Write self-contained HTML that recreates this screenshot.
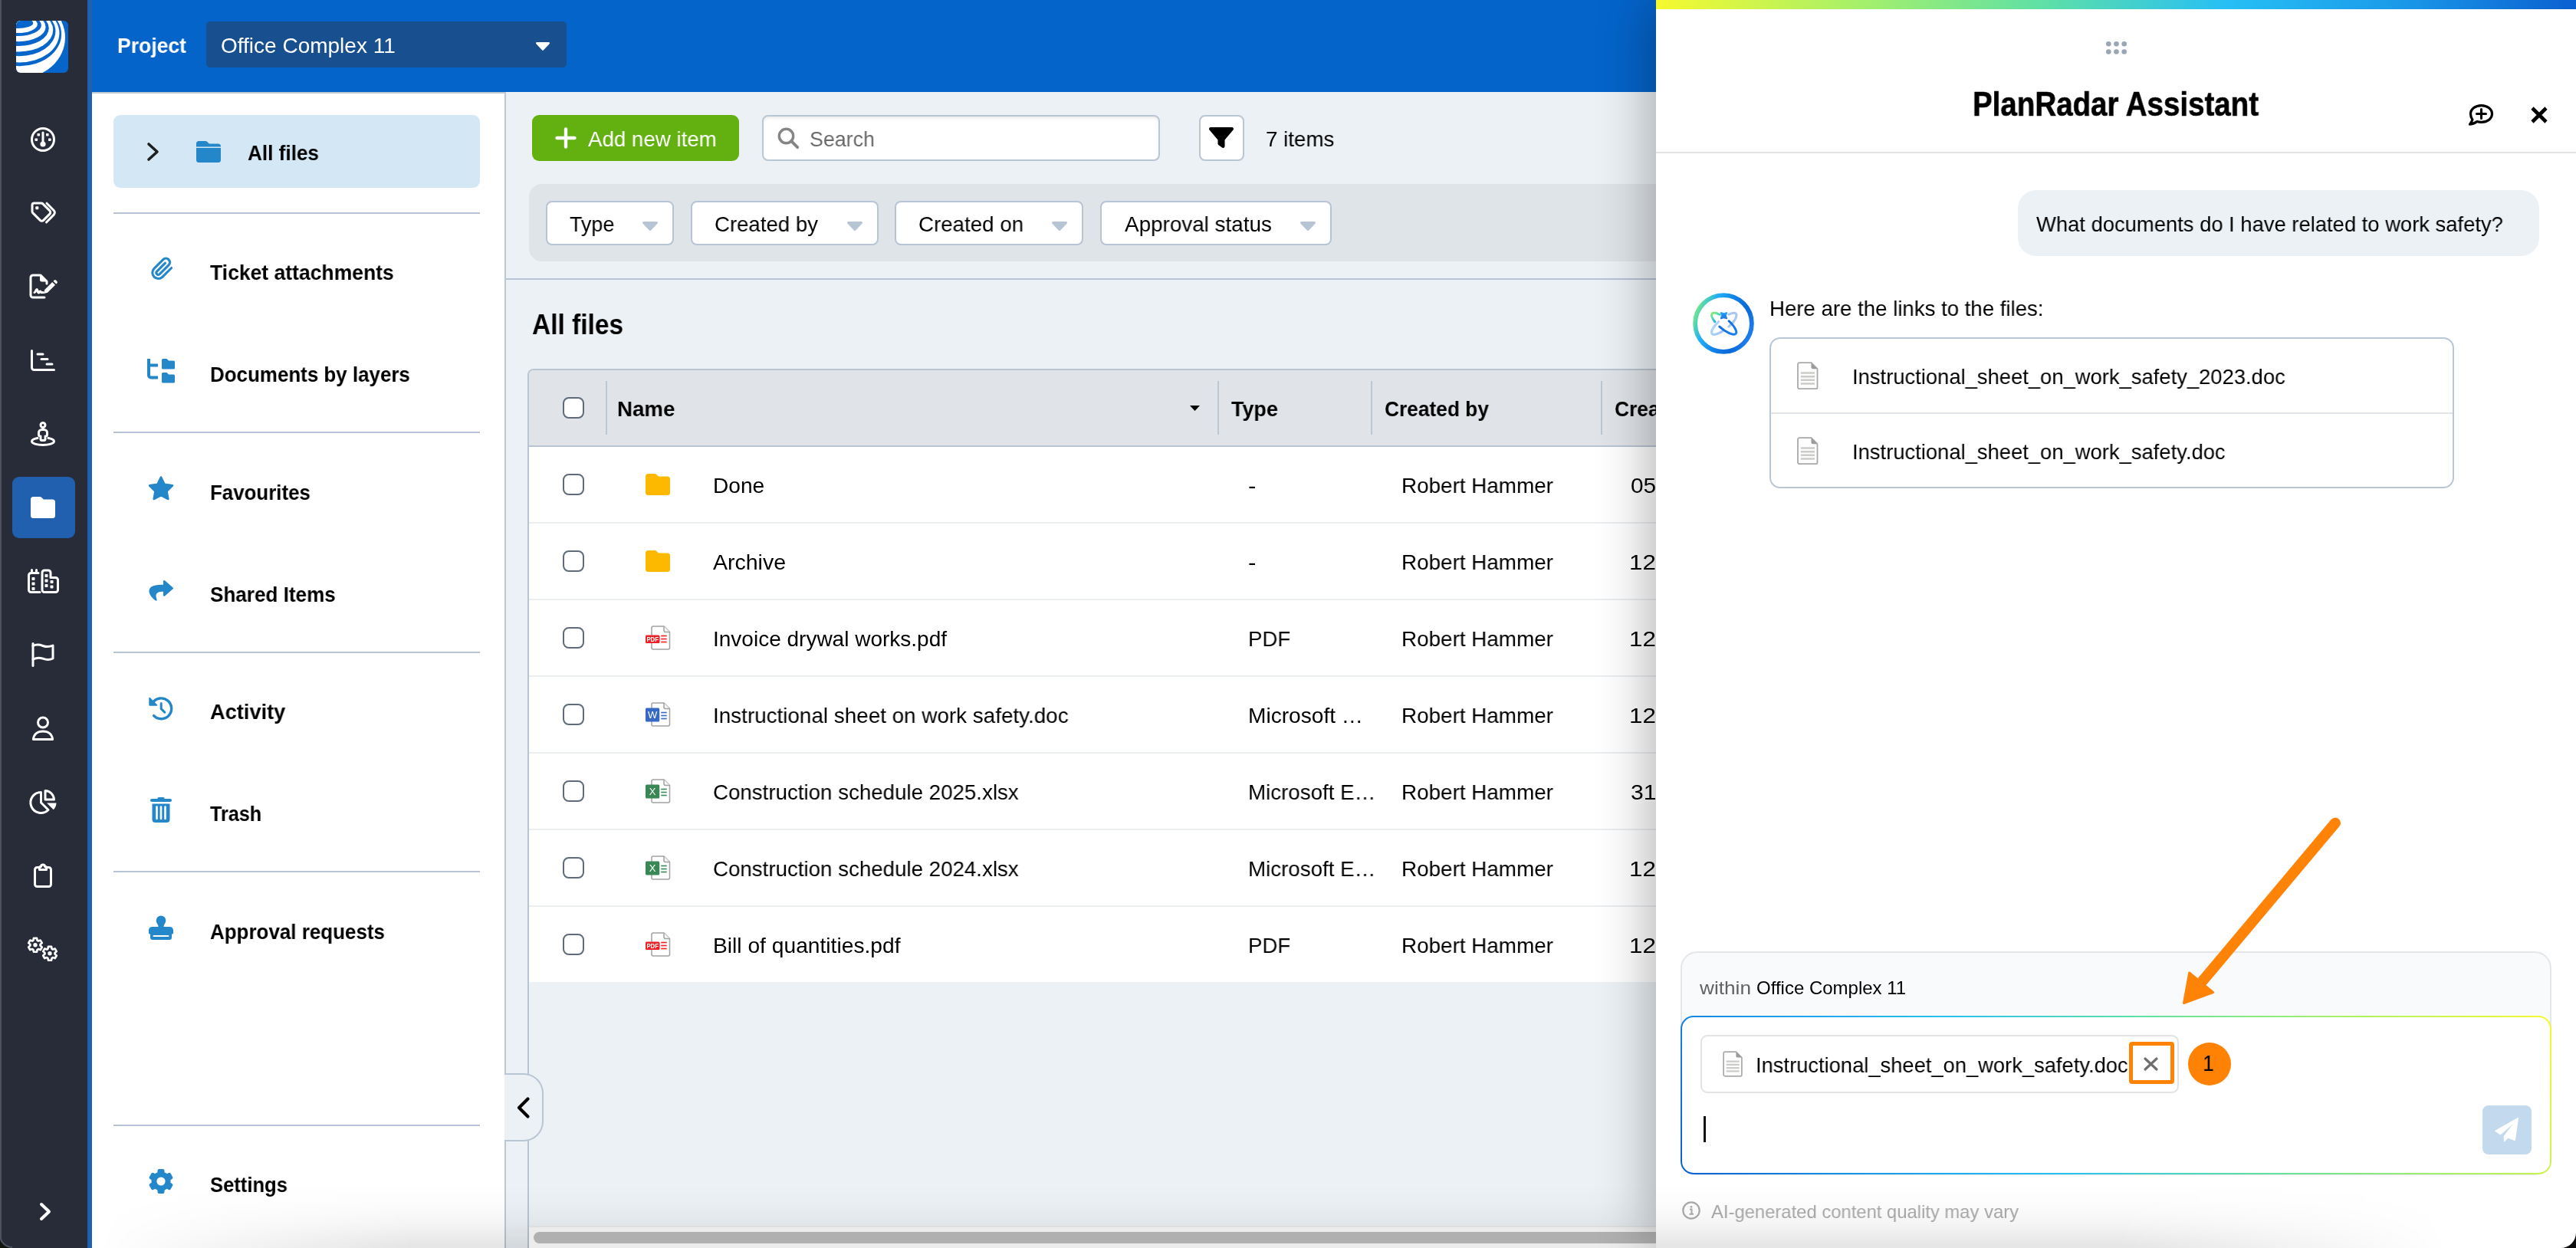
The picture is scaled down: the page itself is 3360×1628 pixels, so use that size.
<!DOCTYPE html>
<html lang="en"><head><meta charset="utf-8"><title>PlanRadar – Documents</title>
<style>
html,body{margin:0;padding:0}
body{position:relative;width:3360px;height:1628px;overflow:hidden;background:#ecf1f5;font-family:"Liberation Sans",sans-serif;font-size:28px;color:#000}
body *{position:absolute;box-sizing:border-box}
.t{will-change:transform;white-space:nowrap;line-height:1;transform-origin:0 0;margin:0;padding:0}
svg{overflow:visible}
.cb{width:28px;height:28px;border:2px solid #606b79;border-radius:8px;background:#fff}
.dd{height:58px;border:2px solid #b6c4d5;border-radius:8px;background:#fff}
.hr{height:2px;background:#b6c4d6}
.rl{height:2px;background:#ebeef1}
.vs{width:2px;background:#bcc7d4}

</style></head>
<body>
<header id="topbar" style="left:120px;top:0px;width:3240px;height:120px;background:#0464ca">
<span class="t" style="left:33.3px;top:45.6px;font-weight:700;color:#fff;transform:scaleX(0.948)">Project</span>
<div id="project-select" style="left:149px;top:28px;width:470px;height:60px;background:#18508f;border-radius:5px">
<span class="t" style="left:19.3px;top:17.6px;color:#fff;transform:scaleX(0.999)">Office Complex 11</span>
<svg style="left:429.5px;top:27px;" width="18" height="10.8" viewBox="0 0 20 12"><path d="M1.5 0h17a1.5 1.5 0 0 1 1.1 2.5l-8.5 9a1.5 1.5 0 0 1-2.2 0l-8.5-9A1.5 1.5 0 0 1 1.5 0z" fill="#fff"/></svg>
</div>
</header>
<aside id="sidebar" style="left:0px;top:0px;width:120px;height:1628px;background:#272c38;box-shadow:inset -6px 0 0 #2060af,inset 2px 0 0 #4b525d">
<svg style="left:21px;top:27px;" width="68" height="68" viewBox="0 0 68 68"><defs><clipPath id="lg"><rect width="68" height="68" rx="6"/></clipPath></defs>
<g clip-path="url(#lg)"><rect width="68" height="68" fill="#0565cb"/>
<ellipse cx="5" cy="22" rx="59" ry="53" fill="#fff"/><ellipse cx="4.85" cy="17.7" rx="54.24" ry="41.47" fill="#0565cb"/><ellipse cx="4.63" cy="16.29" rx="51.82" ry="38.16" fill="#fff"/><ellipse cx="4.22" cy="13.8" rx="47.19" ry="32.33" fill="#0565cb"/><ellipse cx="3.96" cy="12.12" rx="44.28" ry="28.39" fill="#fff"/><ellipse cx="3.51" cy="9.87" rx="39.24" ry="23.12" fill="#0565cb"/><ellipse cx="3.17" cy="8.13" rx="35.42" ry="19.05" fill="#fff"/><ellipse cx="2.7" cy="5.97" rx="30.19" ry="13.99" fill="#0565cb"/><ellipse cx="2.29" cy="4.8" rx="25.56" ry="11.25" fill="#fff"/><ellipse cx="1.83" cy="3.0" rx="20.43" ry="7.03" fill="#0565cb"/></g></svg>
<svg style="left:40px;top:166px;" width="32" height="32" viewBox="0 0 32 32"><g fill="none" stroke="#fff" stroke-width="3" stroke-linecap="round" stroke-linejoin="round"><circle cx="16" cy="16" r="14.5"/><path d="M16 7v14"/></g><circle cx="16" cy="22" r="3.6" fill="#fff"/><g fill="#fff"><rect x="5.5" y="14.5" width="3.6" height="3.6" rx=".8"/><rect x="8.5" y="8" width="3.6" height="3.6" rx=".8"/><rect x="20" y="8" width="3.6" height="3.6" rx=".8"/><rect x="23" y="14.5" width="3.6" height="3.6" rx=".8"/></g></svg>
<svg style="left:40px;top:263px;" width="33" height="30" viewBox="0 0 33 30"><g fill="none" stroke="#fff" stroke-width="3" stroke-linecap="round" stroke-linejoin="round"><path d="M2 4.5A2.5 2.5 0 0 1 4.5 2h9.3a3 3 0 0 1 2.1.9l9 9a3 3 0 0 1 0 4.2l-8.3 8.3a3 3 0 0 1-4.2 0l-9.5-9.5A3 3 0 0 1 2 12.800z"/><path d="M21 2.200l9.200 9.300a4 4 0 0 1 0 5.600l-9.700 9.900"/></g><rect x="6.300" y="6.300" width="4" height="4" rx="1" fill="#fff"/></svg>
<svg style="left:38px;top:357px;" width="37" height="33" viewBox="0 0 37 33"><g fill="none" stroke="#fff" stroke-width="3" stroke-linecap="round" stroke-linejoin="round"><path d="M20 31H5a3 3 0 0 1-3-3V5a3 3 0 0 1 3-3h10l8 8v3"/><path d="M7 24.500c1.500 0 1.800-4 3-4s1 4.500 2.300 4.500 1-2 2-2 .7 1.500 2 1.500h2"/></g><path d="M14 2v6a2.500 2.500 0 0 0 2.500 2.500H23z" fill="#fff"/><path d="M19 26l1.200-5 10-10 3.800 3.800-10 10z" fill="#fff"/><path d="M31.500 9.700l1-1a2 2 0 0 1 2.800 0l1 1a2 2 0 0 1 0 2.800l-1 1z" fill="#fff"/></svg>
<svg style="left:40px;top:456px;" width="32" height="28" viewBox="0 0 32 28"><g fill="none" stroke="#fff" stroke-width="3" stroke-linecap="round" stroke-linejoin="round"><path d="M1.500 1.500v22a3 3 0 0 0 3 3h26"/><path d="M9 6h7M14 12.500h8M21 19h7"/></g></svg>
<svg style="left:40px;top:550px;" width="32" height="32" viewBox="0 0 32 32"><g fill="none" stroke="#fff" stroke-width="3" stroke-linecap="round" stroke-linejoin="round"><circle cx="16" cy="4.500" r="3"/><path d="M10.500 14.500a4 4 0 0 1 4-4h3a4 4 0 0 1 4 4v2.500a2 2 0 0 1-2 2h-.500v4a1.500 1.500 0 0 1-1.500 1.500h-3a1.500 1.500 0 0 1-1.500-1.500v-4h-.500a2 2 0 0 1-2-2z"/><path d="M9 21.500c-4.500.800-7.500 2.400-7.500 4.300 0 2.600 6.500 4.700 14.500 4.700s14.500-2.100 14.500-4.700c0-1.900-3-3.500-7.500-4.300"/></g></svg>
<div style="left:16px;top:622px;width:82px;height:80px;background:#2060af;border-radius:9px"></div>
<svg style="left:40px;top:648px;" width="32" height="28" viewBox="0 0 32 28"><path d="M3.500 0h8.700a3 3 0 0 1 2.100.9l2.600 2.600H28.500A3.500 3.500 0 0 1 32 7v17.500a3.500 3.500 0 0 1-3.500 3.500h-25A3.500 3.500 0 0 1 0 24.500v-21A3.500 3.500 0 0 1 3.500 0z" fill="#fff"/></svg>
<svg style="left:36px;top:742px;" width="41" height="32" viewBox="0 0 41 32"><g fill="none" stroke="#fff" stroke-width="3" stroke-linecap="round" stroke-linejoin="round"><path d="M16 30.500H4.500a3 3 0 0 1-3-3V8.500a3 3 0 0 1 3-3H14"/><path d="M5.500 5.500v-4M11.500 5.500v-4"/><path d="M19 5a3 3 0 0 1 3-3h5a3 3 0 0 1 3 3v6.500h6.500a3 3 0 0 1 3 3v13a3 3 0 0 1-3 3H22a3 3 0 0 1-3-3z"/></g><g fill="#fff"><rect x="5.500" y="11" width="4" height="4" rx=".8"/><rect x="5.500" y="17.500" width="4" height="4" rx=".8"/><rect x="5.500" y="24" width="4" height="4" rx=".8"/><rect x="22.500" y="7" width="4" height="4" rx=".8"/><rect x="22.500" y="13.500" width="4" height="4" rx=".8"/><rect x="22.500" y="20" width="4" height="4" rx=".8"/><rect x="29.500" y="15" width="4" height="4" rx=".8"/><rect x="29.500" y="21.500" width="4" height="4" rx=".8"/></g></svg>
<svg style="left:41px;top:838px;" width="30" height="32" viewBox="0 0 30 32"><g fill="none" stroke="#fff" stroke-width="3" stroke-linecap="round" stroke-linejoin="round"><path d="M2 1.500v29"/><path d="M2 4.500c5-2.500 9-1.500 13 0s8 1.700 13-.5v17c-5 2.500-9 1.700-13 .2s-8-1.700-13 .8"/></g></svg>
<svg style="left:42px;top:934px;" width="28" height="32" viewBox="0 0 28 32"><g fill="none" stroke="#fff" stroke-width="3" stroke-linecap="round" stroke-linejoin="round"><circle cx="14" cy="8.500" r="6.500"/><path d="M1.500 30.500c.5-7 5.500-10.500 12.500-10.500s12 3.500 12.500 10.500z"/></g></svg>
<svg style="left:40px;top:1030px;" width="34" height="32" viewBox="0 0 34 32"><g fill="none" stroke="#fff" stroke-width="3" stroke-linecap="round" stroke-linejoin="round"><path d="M13.500 3.500A13.500 13.500 0 1 0 23 26.500L13.500 17z"/><path d="M19 1.500a12 12 0 0 1 11.500 11.500H19z"/></g><path d="M21 17.500h12.500a13.500 13.500 0 0 1-3.700 8.800z" fill="#fff"/></svg>
<svg style="left:44px;top:1126px;" width="24" height="32" viewBox="0 0 24 32"><g fill="none" stroke="#fff" stroke-width="3" stroke-linecap="round" stroke-linejoin="round"><path d="M7.500 5.500H4.500a3 3 0 0 0-3 3v19a3 3 0 0 0 3 3h15a3 3 0 0 0 3-3v-19a3 3 0 0 0-3-3h-3"/><path d="M7.500 8.500v-3a1 1 0 0 1 1-1h1a2.500 2.500 0 0 1 5 0h1a1 1 0 0 1 1 1v3z"/></g></svg>
<svg style="left:34px;top:1220px;" width="44" height="36" viewBox="0 0 44 36"><g fill="none" stroke="#fff" stroke-width="2.700" stroke-linejoin="round"><path d="M9.39 6.74L9.97 3.83L14.03 3.83L14.61 6.74L15.95 7.51L18.76 6.56L20.79 10.07L18.55 12.02L18.55 13.58L20.79 15.53L18.76 19.04L15.95 18.09L14.61 18.86L14.03 21.77L9.97 21.77L9.39 18.86L8.05 18.09L5.24 19.04L3.21 15.53L5.45 13.58L5.45 12.02L3.21 10.07L5.24 6.56L8.05 7.51z"/><path d="M28.39 17.74L28.97 14.83L33.03 14.83L33.61 17.74L34.95 18.51L37.76 17.56L39.79 21.07L37.55 23.02L37.55 24.58L39.79 26.53L37.76 30.04L34.95 29.09L33.61 29.86L33.03 32.77L28.97 32.77L28.39 29.86L27.05 29.09L24.24 30.04L22.21 26.53L24.45 24.58L24.45 23.02L22.21 21.07L24.24 17.56L27.05 18.51z"/></g><circle cx="12" cy="12.800" r="2.700" fill="#fff"/><circle cx="31" cy="23.800" r="2.700" fill="#fff"/></svg>
<svg style="left:52px;top:1569px;" width="14" height="23" viewBox="0 0 14 23"><path d="M2 2l10 9.500L2 21" fill="none" stroke="#fff" stroke-width="4" stroke-linecap="round" stroke-linejoin="round"/></svg>
</aside>
<nav id="docnav" style="left:120px;top:120px;width:540px;height:1508px;background:#fff;box-shadow:inset -2px 0 0 #bcc8d5,inset 0 2px 0 #bfc9d4">
<div style="left:28px;top:30px;width:478px;height:95px;background:#d4e7f5;border-radius:9px"></div>
<svg style="left:72px;top:66px;" width="15" height="24" viewBox="0 0 15 24"><path d="M2 2l11 10L2 22" fill="none" stroke="#1e1e1e" stroke-width="3.600" stroke-linecap="round" stroke-linejoin="round"/></svg>
<svg style="left:136px;top:64px;" width="32" height="28" viewBox="0 0 32 28"><path d="M3.500 0h8.700a3 3 0 0 1 2.100.9l2.600 2.600H28.500A3.500 3.500 0 0 1 32 7v17.500a3.500 3.500 0 0 1-3.500 3.500h-25A3.500 3.500 0 0 1 0 24.500v-21A3.500 3.500 0 0 1 3.500 0z" fill="#2487c9"/><path d="M0 8.200h32" stroke="#d4e7f5" stroke-width="1.500"/></svg>
<span class="t" style="left:202.7px;top:65.6px;font-weight:700;transform:scaleX(0.933)">All files</span>
<div class="hr" style="left:28px;top:157px;width:478px;height:2px;"></div>
<div class="hr" style="left:28px;top:443px;width:478px;height:2px;"></div>
<div class="hr" style="left:28px;top:730px;width:478px;height:2px;"></div>
<div class="hr" style="left:28px;top:1016px;width:478px;height:2px;"></div>
<div class="hr" style="left:28px;top:1347px;width:478px;height:2px;"></div>
<svg style="left:75.5px;top:215px;" width="29.5" height="32.5" viewBox="0 0 22 24"><path d="M20.600 10.700l-8.800 8.800a5.750 5.750 0 0 1-8.130-8.130l8.800-8.800a3.830 3.830 0 0 1 5.420 5.420l-8.810 8.800a1.920 1.920 0 0 1-2.710-2.710l8.130-8.120" fill="none" stroke="#2487c9" stroke-width="2.300" stroke-linecap="round" stroke-linejoin="round"/></svg>
<span class="t" style="left:153.5px;top:221.6px;font-weight:700;transform:scaleX(0.947)">Ticket attachments</span>
<svg style="left:72px;top:348px;" width="36" height="32" viewBox="0 0 36 32"><path d="M2 0v21.500a3 3 0 0 0 3 3h9M2 8.500h12" fill="none" stroke="#2487c9" stroke-width="4"/><g fill="#2487c9"><path d="M19 1.500a1.500 1.500 0 0 1 1.500-1.500h5l2.500 2.500h6.500a1.500 1.500 0 0 1 1.500 1.500v8a1.500 1.500 0 0 1-1.500 1.500h-14a1.500 1.500 0 0 1-1.500-1.500z"/><path d="M19 19.500a1.500 1.500 0 0 1 1.500-1.500h5l2.500 2.500h6.500a1.500 1.500 0 0 1 1.500 1.500v8a1.500 1.500 0 0 1-1.500 1.500h-14a1.500 1.500 0 0 1-1.500-1.500z"/></g></svg>
<span class="t" style="left:153.5px;top:354.6px;font-weight:700;transform:scaleX(0.926)">Documents by layers</span>
<svg style="left:73px;top:501px;" width="34" height="32" viewBox="0 0 34 32"><path d="M17 1.500l4.600 9.400 10.400 1.500-7.500 7.300 1.800 10.300L17 25.100 7.700 30l1.800-10.300L2 12.400l10.400-1.500z" fill="#2487c9" stroke="#2487c9" stroke-width="2.600" stroke-linejoin="round"/></svg>
<span class="t" style="left:153.5px;top:508.6px;font-weight:700;transform:scaleX(0.924)">Favourites</span>
<svg style="left:74px;top:637px;" width="32" height="28" viewBox="0 0 32 28"><path d="M19 1.200a1.200 1.200 0 0 1 2-.9l10.500 9.200a1.200 1.200 0 0 1 0 1.800L21 20.500a1.200 1.200 0 0 1-2-.9v-4.800c-7 0-10.800 1.800-9 8.500.4 1.400 1 2.700.3 3.300-.7.600-1.700-.2-2.700-1C3.500 22 .5 18 .5 14 .5 7 9.500 5.800 19 5.700z" fill="#2487c9"/></svg>
<span class="t" style="left:153.5px;top:641.6px;font-weight:700;transform:scaleX(0.931)">Shared Items</span>
<svg style="left:74px;top:788px;" width="32" height="32" viewBox="0 0 32 32"><path d="M5.300 8.600A13.400 13.400 0 1 1 6.600 25.600" fill="none" stroke="#2487c9" stroke-width="3.400" stroke-linecap="round"/><path d="M.300 2.600a.800.800 0 0 1 1.400-.600l9.300 9.300a.800.800 0 0 1-.600 1.400H1.100a.800.800 0 0 1-.800-.800z" fill="#2487c9"/><path d="M16.200 9.500v7.200l4.600 4.400" fill="none" stroke="#2487c9" stroke-width="3" stroke-linecap="round" stroke-linejoin="round"/></svg>
<span class="t" style="left:153.5px;top:794.6px;font-weight:700;transform:scaleX(0.972)">Activity</span>
<svg style="left:76px;top:920px;" width="28" height="33" viewBox="0 0 28 33"><path d="M9.500 1.500A1.500 1.500 0 0 1 11 0h6a1.500 1.500 0 0 1 1.500 1.500V2H26a2 2 0 0 1 0 4H2a2 2 0 0 1 0-4h7.500zM2.500 8.500h23V29a4 4 0 0 1-4 4h-15a4 4 0 0 1-4-4z" fill="#2487c9"/><path d="M8.500 12.500v15.500M14 12.500v15.500M19.500 12.500v15.500" stroke="#fff" stroke-width="2.600" stroke-linecap="round"/></svg>
<span class="t" style="left:153.5px;top:927.6px;font-weight:700;transform:scaleX(0.900)">Trash</span>
<svg style="left:74px;top:1074px;" width="32" height="32" viewBox="0 0 32 32"><path d="M16 .500a6.300 6.300 0 0 1 6.300 6.300c0 2.200-1.200 3.700-2.200 5.600-.500 1-.600 1.700-.600 2.600h8a4.500 4.500 0 0 1 4.500 4.500v3.500a1.500 1.500 0 0 1-1.500 1.500H30v4.500a3 3 0 0 1-3 3H5a3 3 0 0 1-3-3V24.500H1.500A1.500 1.500 0 0 1 0 23v-3.500A4.500 4.500 0 0 1 4.500 15h8c0-.900-.100-1.600-.600-2.600-1-1.900-2.200-3.400-2.200-5.600A6.300 6.300 0 0 1 16 .500z" fill="#2487c9"/><path d="M6.500 27h19" stroke="#fff" stroke-width="2" stroke-linecap="round"/></svg>
<span class="t" style="left:153.5px;top:1081.6px;font-weight:700;transform:scaleX(0.927)">Approval requests</span>
<svg style="left:74px;top:1405px;" width="32" height="32" viewBox="0 0 32 32"><g fill="#2487c9"><rect x="11.50" y="0.00" width="9.00" height="32.00" rx="1.98" transform="rotate(0.0 16 16)"/><rect x="11.50" y="0.00" width="9.00" height="32.00" rx="1.98" transform="rotate(60.0 16 16)"/><rect x="11.50" y="0.00" width="9.00" height="32.00" rx="1.98" transform="rotate(120.0 16 16)"/><circle cx="16" cy="16" r="12.500"/></g><circle cx="16" cy="16" r="5.600" fill="#fff"/></svg>
<span class="t" style="left:153.5px;top:1411.6px;font-weight:700;transform:scaleX(0.913)">Settings</span>
</nav>
<main id="content" style="left:660px;top:120px;width:2700px;height:1508px;">
<div id="btn-add" style="left:34px;top:30px;width:270px;height:60px;background:#62b110;border-radius:9px">
<svg style="left:31px;top:17px;" width="26" height="26" viewBox="0 0 26 26"><path d="M13 1.500v23M1.500 13h23" stroke="#fff" stroke-width="4.400" stroke-linecap="round"/></svg>
<span class="t" style="left:73.0px;top:17.6px;color:#fff;transform:scaleX(0.989)">Add new item</span>
</div>
<div id="search" style="left:334px;top:30px;width:519px;height:60px;background:#fff;border:2px solid #b9c6d4;border-radius:8px;box-shadow:inset 0 3px 4px -1px rgba(0,0,0,.09)">
<svg style="left:17.5px;top:13.5px;" width="28" height="28" viewBox="0 0 28 28"><circle cx="11.500" cy="11.500" r="9.200" fill="none" stroke="#858585" stroke-width="3.400"/><path d="M18.200 18.200l8 8" stroke="#858585" stroke-width="3.800" stroke-linecap="round"/></svg>
<span class="t" style="left:59.6px;top:15.6px;color:#6a6a6a;transform:scaleX(0.956)">Search</span>
</div>
<div style="left:904px;top:30px;width:59px;height:60px;background:#fff;border:2px solid #b9c6d4;border-radius:8px"></div>
<svg style="left:917px;top:46px;" width="32" height="28" viewBox="0 0 32 28"><path d="M2.200 0h27.600a2.200 2.200 0 0 1 1.700 3.600L20.500 16.500v8.300a2.200 2.200 0 0 1-3.500 1.800l-4.500-3.300a2.500 2.500 0 0 1-1-2v-4.800L.500 3.600A2.200 2.200 0 0 1 2.200 0z" fill="#000"/></svg>
<span class="t" style="left:990.6px;top:47.6px;transform:scaleX(0.990)">7 items</span>
<div id="filters" style="left:30px;top:120px;width:2700px;height:101px;background:#dfe4e9;border-radius:17px">
<div class="dd" style="left:21.5px;top:22px;width:167.5px;height:58px;"></div>
<span class="t" style="left:52.9px;top:38.6px;transform:scaleX(0.960)">Type</span>
<svg style="left:147.7px;top:49px;" width="20" height="12" viewBox="0 0 20 12"><path d="M1.500 0h17a1.500 1.500 0 0 1 1.100 2.500l-8.500 9a1.500 1.500 0 0 1-2.200 0l-8.500-9A1.500 1.500 0 0 1 1.500 0z" fill="#b6c4d4"/></svg>
<div class="dd" style="left:210.6px;top:22px;width:245.2px;height:58px;"></div>
<span class="t" style="left:241.6px;top:38.6px;transform:scaleX(0.985)">Created by</span>
<svg style="left:415px;top:49px;" width="20" height="12" viewBox="0 0 20 12"><path d="M1.500 0h17a1.500 1.500 0 0 1 1.100 2.500l-8.500 9a1.500 1.500 0 0 1-2.200 0l-8.500-9A1.500 1.500 0 0 1 1.500 0z" fill="#b6c4d4"/></svg>
<div class="dd" style="left:477.4px;top:22px;width:245.5px;height:58px;"></div>
<span class="t" style="left:508.2px;top:38.6px;transform:scaleX(0.989)">Created on</span>
<svg style="left:681.8px;top:49px;" width="20" height="12" viewBox="0 0 20 12"><path d="M1.500 0h17a1.500 1.500 0 0 1 1.100 2.500l-8.500 9a1.500 1.500 0 0 1-2.200 0l-8.500-9A1.500 1.500 0 0 1 1.500 0z" fill="#b6c4d4"/></svg>
<div class="dd" style="left:744.7px;top:22px;width:302.3px;height:58px;"></div>
<span class="t" style="left:776.8px;top:38.6px;transform:scaleX(0.994)">Approval status</span>
<svg style="left:1005.7px;top:49px;" width="20" height="12" viewBox="0 0 20 12"><path d="M1.500 0h17a1.500 1.500 0 0 1 1.100 2.500l-8.500 9a1.500 1.500 0 0 1-2.200 0l-8.500-9A1.500 1.500 0 0 1 1.500 0z" fill="#b6c4d4"/></svg>
</div>
<div class="hr" style="left:0px;top:242.5px;width:2700px;height:2px;"></div>
<h1 class="t" style="left:34.4px;top:285.8px;font-size:36px;font-weight:700;transform:scaleX(0.930)">All files</h1>
<div id="table" style="left:28px;top:361px;width:2700px;height:1147px;border:2px solid #b9c5d3;border-bottom:none;border-radius:8px 0 0 0;overflow:hidden">
<div style="left:0px;top:0px;width:2700px;height:98px;background:#e0e4e8"></div>
<div style="left:0px;top:98px;width:2700px;height:2px;background:#b9c5d3"></div>
<div style="left:0px;top:100px;width:2700px;height:698px;background:#fff"></div>
<div class="cb" style="left:44px;top:34.5px;width:28px;height:28px;"></div>
<div class="vs" style="left:100px;top:13.5px;width:2px;height:70px;"></div>
<div class="vs" style="left:898px;top:13.5px;width:2px;height:70px;"></div>
<div class="vs" style="left:1098px;top:13.5px;width:2px;height:70px;"></div>
<div class="vs" style="left:1398px;top:13.5px;width:2px;height:70px;"></div>
<span class="t" style="left:115.0px;top:36.6px;font-weight:700;transform:scaleX(0.988)">Name</span>
<svg style="left:862px;top:46px;" width="13" height="7" viewBox="0 0 13 7"><path d="M0 0h13L6.500 7z" fill="#000"/></svg>
<span class="t" style="left:915.8px;top:36.6px;font-weight:700;transform:scaleX(0.962)">Type</span>
<span class="t" style="left:1115.5px;top:36.6px;font-weight:700;transform:scaleX(0.939)">Created by</span>
<span class="t" style="left:1415.5px;top:36.6px;font-weight:700;transform:scaleX(0.941)">Created on</span>
<div class="cb" style="left:44px;top:135px;width:28px;height:28px;"></div>
<svg style="left:152px;top:135px;" width="32" height="28" viewBox="0 0 32 28"><path d="M3.500 0h8.700a3 3 0 0 1 2.100.9l2.600 2.600H28.500A3.500 3.500 0 0 1 32 7v17.500a3.500 3.500 0 0 1-3.500 3.500h-25A3.500 3.500 0 0 1 0 24.500v-21A3.500 3.500 0 0 1 3.500 0z" fill="#fdb900"/></svg>
<span class="t" style="left:239.8px;top:136.6px;transform:scaleX(1.004)">Done</span>
<span class="t" style="left:937.6px;top:136.6px;transform:scaleX(1.114)">-</span>
<span class="t" style="left:1137.8px;top:136.6px;transform:scaleX(0.994)">Robert Hammer</span>
<span class="t" style="left:1436.7px;top:136.6px;transform:scaleX(1.066)">05</span>
<div class="rl" style="left:0px;top:198px;width:2700px;height:2px;"></div>
<div class="cb" style="left:44px;top:235px;width:28px;height:28px;"></div>
<svg style="left:152px;top:235px;" width="32" height="28" viewBox="0 0 32 28"><path d="M3.500 0h8.700a3 3 0 0 1 2.100.9l2.600 2.600H28.500A3.500 3.500 0 0 1 32 7v17.500a3.500 3.500 0 0 1-3.500 3.500h-25A3.500 3.500 0 0 1 0 24.500v-21A3.500 3.500 0 0 1 3.500 0z" fill="#fdb900"/></svg>
<span class="t" style="left:239.8px;top:236.6px;transform:scaleX(1.018)">Archive</span>
<span class="t" style="left:937.6px;top:236.6px;transform:scaleX(1.114)">-</span>
<span class="t" style="left:1137.8px;top:236.6px;transform:scaleX(0.994)">Robert Hammer</span>
<span class="t" style="left:1435.4px;top:236.6px;transform:scaleX(1.119)">12</span>
<div class="rl" style="left:0px;top:298px;width:2700px;height:2px;"></div>
<div class="cb" style="left:44px;top:335px;width:28px;height:28px;"></div>
<svg style="left:152px;top:333px;will-change:transform;" width="32" height="32" viewBox="0 0 32 32"><path d="M10 1h14l7.500 7.500V29a2 2 0 0 1-2 2H10a2 2 0 0 1-2-2V3a2 2 0 0 1 2-2z" fill="#fff" stroke="#a2a2a2" stroke-width="1.500"/><path d="M24 1v5.500a2 2 0 0 0 2 2h5.500" fill="#f4f4f4" stroke="#a2a2a2" stroke-width="1.500"/><path d="M20.200 13.5h7.500" stroke="#ee2024" stroke-width="1.600"/><path d="M20.200 17.5h7.500" stroke="#ee2024" stroke-width="1.600"/><path d="M20.200 21.5h7.500" stroke="#ee2024" stroke-width="1.600"/><rect x="0" y="12.500" width="18.500" height="10.500" rx="1.500" fill="#ee2024"/><text x="9.200" y="21" font-size="8.400" font-weight="700" fill="#fff" text-anchor="middle" font-family="Liberation Sans,sans-serif" textLength="15.500" lengthAdjust="spacingAndGlyphs">PDF</text></svg>
<span class="t" style="left:239.8px;top:336.6px;transform:scaleX(1.000)">Invoice drywal works.pdf</span>
<span class="t" style="left:937.8px;top:336.6px;transform:scaleX(0.984)">PDF</span>
<span class="t" style="left:1137.8px;top:336.6px;transform:scaleX(0.994)">Robert Hammer</span>
<span class="t" style="left:1435.4px;top:336.6px;transform:scaleX(1.119)">12</span>
<div class="rl" style="left:0px;top:398px;width:2700px;height:2px;"></div>
<div class="cb" style="left:44px;top:435px;width:28px;height:28px;"></div>
<svg style="left:152px;top:433px;will-change:transform;" width="32" height="32" viewBox="0 0 32 32"><path d="M10 1h14l7.500 7.500V29a2 2 0 0 1-2 2H10a2 2 0 0 1-2-2V3a2 2 0 0 1 2-2z" fill="#fff" stroke="#a2a2a2" stroke-width="1.500"/><path d="M24 1v5.500a2 2 0 0 0 2 2h5.500" fill="#f4f4f4" stroke="#a2a2a2" stroke-width="1.500"/><path d="M20.200 13.5h7.500" stroke="#3668c4" stroke-width="1.600"/><path d="M20.200 17.5h7.500" stroke="#3668c4" stroke-width="1.600"/><path d="M20.200 21.5h7.500" stroke="#3668c4" stroke-width="1.600"/><rect x="0" y="7.400" width="18.200" height="18.200" rx="1.500" fill="#3668c4"/><text x="9.100" y="21" font-size="13" fill="#fff" text-anchor="middle" font-family="Liberation Sans,sans-serif">W</text></svg>
<span class="t" style="left:239.8px;top:436.6px;transform:scaleX(0.994)">Instructional sheet on work safety.doc</span>
<span class="t" style="left:937.7px;top:436.6px;transform:scaleX(1.004)">Microsoft …</span>
<span class="t" style="left:1137.8px;top:436.6px;transform:scaleX(0.994)">Robert Hammer</span>
<span class="t" style="left:1435.4px;top:436.6px;transform:scaleX(1.119)">12</span>
<div class="rl" style="left:0px;top:498px;width:2700px;height:2px;"></div>
<div class="cb" style="left:44px;top:535px;width:28px;height:28px;"></div>
<svg style="left:152px;top:533px;will-change:transform;" width="32" height="32" viewBox="0 0 32 32"><path d="M10 1h14l7.500 7.500V29a2 2 0 0 1-2 2H10a2 2 0 0 1-2-2V3a2 2 0 0 1 2-2z" fill="#fff" stroke="#a2a2a2" stroke-width="1.500"/><path d="M24 1v5.500a2 2 0 0 0 2 2h5.500" fill="#f4f4f4" stroke="#a2a2a2" stroke-width="1.500"/><path d="M20.200 13.5h7.500" stroke="#3a8756" stroke-width="1.600"/><path d="M20.200 17.5h7.500" stroke="#3a8756" stroke-width="1.600"/><path d="M20.200 21.5h7.500" stroke="#3a8756" stroke-width="1.600"/><rect x="0" y="7.400" width="18.200" height="18.200" rx="1.500" fill="#3a8756"/><text x="9.100" y="21" font-size="13" fill="#fff" text-anchor="middle" font-family="Liberation Sans,sans-serif">X</text></svg>
<span class="t" style="left:239.8px;top:536.6px;transform:scaleX(0.989)">Construction schedule 2025.xlsx</span>
<span class="t" style="left:937.8px;top:536.6px;transform:scaleX(0.990)">Microsoft E…</span>
<span class="t" style="left:1137.8px;top:536.6px;transform:scaleX(0.994)">Robert Hammer</span>
<span class="t" style="left:1436.7px;top:536.6px;transform:scaleX(1.075)">31</span>
<div class="rl" style="left:0px;top:598px;width:2700px;height:2px;"></div>
<div class="cb" style="left:44px;top:635px;width:28px;height:28px;"></div>
<svg style="left:152px;top:633px;will-change:transform;" width="32" height="32" viewBox="0 0 32 32"><path d="M10 1h14l7.500 7.500V29a2 2 0 0 1-2 2H10a2 2 0 0 1-2-2V3a2 2 0 0 1 2-2z" fill="#fff" stroke="#a2a2a2" stroke-width="1.500"/><path d="M24 1v5.500a2 2 0 0 0 2 2h5.500" fill="#f4f4f4" stroke="#a2a2a2" stroke-width="1.500"/><path d="M20.200 13.5h7.500" stroke="#3a8756" stroke-width="1.600"/><path d="M20.200 17.5h7.500" stroke="#3a8756" stroke-width="1.600"/><path d="M20.200 21.5h7.500" stroke="#3a8756" stroke-width="1.600"/><rect x="0" y="7.400" width="18.200" height="18.200" rx="1.500" fill="#3a8756"/><text x="9.100" y="21" font-size="13" fill="#fff" text-anchor="middle" font-family="Liberation Sans,sans-serif">X</text></svg>
<span class="t" style="left:239.8px;top:636.6px;transform:scaleX(0.989)">Construction schedule 2024.xlsx</span>
<span class="t" style="left:937.8px;top:636.6px;transform:scaleX(0.990)">Microsoft E…</span>
<span class="t" style="left:1137.8px;top:636.6px;transform:scaleX(0.994)">Robert Hammer</span>
<span class="t" style="left:1435.4px;top:636.6px;transform:scaleX(1.119)">12</span>
<div class="rl" style="left:0px;top:698px;width:2700px;height:2px;"></div>
<div class="cb" style="left:44px;top:735px;width:28px;height:28px;"></div>
<svg style="left:152px;top:733px;will-change:transform;" width="32" height="32" viewBox="0 0 32 32"><path d="M10 1h14l7.500 7.500V29a2 2 0 0 1-2 2H10a2 2 0 0 1-2-2V3a2 2 0 0 1 2-2z" fill="#fff" stroke="#a2a2a2" stroke-width="1.500"/><path d="M24 1v5.500a2 2 0 0 0 2 2h5.500" fill="#f4f4f4" stroke="#a2a2a2" stroke-width="1.500"/><path d="M20.200 13.5h7.500" stroke="#ee2024" stroke-width="1.600"/><path d="M20.200 17.5h7.500" stroke="#ee2024" stroke-width="1.600"/><path d="M20.200 21.5h7.500" stroke="#ee2024" stroke-width="1.600"/><rect x="0" y="12.500" width="18.500" height="10.500" rx="1.500" fill="#ee2024"/><text x="9.200" y="21" font-size="8.400" font-weight="700" fill="#fff" text-anchor="middle" font-family="Liberation Sans,sans-serif" textLength="15.500" lengthAdjust="spacingAndGlyphs">PDF</text></svg>
<span class="t" style="left:239.8px;top:736.6px;transform:scaleX(1.007)">Bill of quantities.pdf</span>
<span class="t" style="left:937.8px;top:736.6px;transform:scaleX(0.984)">PDF</span>
<span class="t" style="left:1137.8px;top:736.6px;transform:scaleX(0.994)">Robert Hammer</span>
<span class="t" style="left:1435.4px;top:736.6px;transform:scaleX(1.119)">12</span>
</div>
</main>
<div style="left:658px;top:1400px;width:51px;height:89px;background:#ecf1f5;border:2px solid #b8c5d5;border-left:none;border-radius:0 26px 26px 0"></div>
<svg style="left:674px;top:1431px;" width="17" height="28" viewBox="0 0 17 28"><path d="M14.500 2.500L3 14l11.500 11.500" fill="none" stroke="#000" stroke-width="4.200" stroke-linecap="round" stroke-linejoin="round"/></svg>
<div style="left:0px;top:1546px;width:2160px;height:82px;background:linear-gradient(180deg,rgba(0,0,0,0) 0%,rgba(0,0,0,.012) 30%,rgba(0,0,0,.04) 60%,rgba(0,0,0,.105) 100%);-webkit-mask-image:linear-gradient(90deg,transparent 0,transparent 6%,#000 25%);mask-image:linear-gradient(90deg,transparent 0,transparent 6%,#000 25%)"></div>
<div style="left:690px;top:1599px;width:1470px;height:29px;background:#ececec;border-top:2px solid #dedede"></div>
<div style="left:696px;top:1607px;width:1480px;height:15px;background:#b0b0b0;border-radius:8px"></div>
<section id="assistant" style="left:2160px;top:0px;width:1200px;height:1628px;background:#fff;box-shadow:-8px 0 64px rgba(0,0,0,.30)">
<div style="left:0px;top:0px;width:1200px;height:12px;background:linear-gradient(90deg,#f6f92e 0%,#a6f06a 22%,#5fe0a6 42%,#26bff5 62%,#1b9cea 80%,#0a5fd0 100%)"></div>
<svg style="left:586.5px;top:53.5px;" width="27" height="17" viewBox="0 0 27 17"><g fill="#9aa6b4"><circle cx="3.3" cy="3.3" r="3.300"/><circle cx="3.3" cy="13.5" r="3.300"/><circle cx="13.5" cy="3.3" r="3.300"/><circle cx="13.5" cy="13.5" r="3.300"/><circle cx="23.7" cy="3.3" r="3.300"/><circle cx="23.7" cy="13.5" r="3.300"/></g></svg>
<h2 class="t" style="left:412.8px;top:114.0px;font-size:44px;font-weight:700;-webkit-text-stroke:.6px #000;transform:scaleX(0.875)">PlanRadar Assistant</h2>
<svg style="left:1059px;top:136px;" width="33" height="28" viewBox="0 0 33 28"><path d="M17.500 1.600c8 0 14 4.800 14 10.900s-6 10.900-14 10.900c-2 0-3.900-.3-5.600-.9-1.900 1.600-5 3.200-9.400 3.700 1.900-2 3-4.300 3.400-6.300C4.400 18 3.500 15.400 3.500 12.500c0-6.100 6-10.900 14-10.900z" fill="none" stroke="#000" stroke-width="3.200" stroke-linejoin="round"/><path d="M17.500 6.500v12M11.500 12.500h12" stroke="#000" stroke-width="3" stroke-linecap="round"/></svg>
<svg style="left:1141px;top:139px;" width="22" height="22" viewBox="0 0 22 22"><path d="M2 2l18 18M20 2L2 20" stroke="#000" stroke-width="4.600" stroke-linecap="butt"/></svg>
<div style="left:0px;top:198px;width:1200px;height:2px;background:#e2e3e5"></div>
<div id="msg-user" style="left:472px;top:248px;width:680px;height:86px;background:#ecf1f5;border-radius:24px">
<span class="t" style="left:24.2px;top:30.6px;transform:scaleX(0.978)">What documents do I have related to work safety?</span>
</div>
<svg style="left:48px;top:382px;" width="80" height="80" viewBox="0 0 80 80"><defs><linearGradient id="av" x1="0" y1=".35" x2="1" y2=".75"><stop offset="0" stop-color="#68e396"/><stop offset=".22" stop-color="#22b0f6"/><stop offset=".5" stop-color="#1280e8"/><stop offset=".75" stop-color="#0b68d8"/><stop offset="1" stop-color="#1e82f0"/></linearGradient>
<linearGradient id="lg1" x1="0" y1="0" x2="1" y2="1"><stop offset="0" stop-color="#b4dcfd"/><stop offset="1" stop-color="#9dc2f4"/></linearGradient>
<linearGradient id="lg2" x1="0" y1="0" x2=".6" y2="1"><stop offset="0" stop-color="#8aec72"/><stop offset=".45" stop-color="#55dca8"/><stop offset="1" stop-color="#22aef0"/></linearGradient>
<linearGradient id="lg3" x1="0" y1="0" x2="1" y2="1"><stop offset="0" stop-color="#0e66d8"/><stop offset="1" stop-color="#1c80ee"/></linearGradient>
<linearGradient id="lg4" x1="0" y1="0" x2="0" y2="1"><stop offset="0" stop-color="#20a2f8"/><stop offset="1" stop-color="#1872e8"/></linearGradient></defs>
<circle cx="40" cy="40" r="36.900" fill="#fff" stroke="url(#av)" stroke-width="5.800"/>
<g fill="none" stroke-width="3" stroke-linecap="round"><path d="M38.44 50.39A20.4 6.8 -40 0 1 33.65 37.57" stroke="url(#lg1)"/><path d="M46.98 28.12A20.4 6.8 -40 0 1 46.78 44.11" stroke="#a9c6f1"/><path d="M28.81 37.77A20.4 6.8 40 0 1 34.89 28.25" stroke="url(#lg2)"/><path d="M47.04 36.73A20.4 6.8 40 0 1 34.82 44.11" stroke="url(#lg3)"/></g>
<path d="M36.3 25.5Q40.5 27.7 44.7 25.5Q42.5 29.7 44.7 33.9Q40.5 31.7 36.3 33.9Q38.5 29.7 36.3 25.5z" fill="url(#lg4)" stroke="url(#lg4)" stroke-width="1" stroke-linejoin="round"/></svg>
<span class="t" style="left:147.7px;top:388.6px;transform:scaleX(0.986)">Here are the links to the files:</span>
<div id="file-links" style="left:148.2px;top:440.2px;width:893.3px;height:197.3px;border:2px solid #b9c6d6;border-radius:14px;background:#fff">
<svg style="left:33.8px;top:29.8px;" width="28" height="36.5" viewBox="0 0 28 36.500"><path d="M2.500 1h15.500l8 8v24a2 2 0 0 1-2 2H2.500a2 2 0 0 1-2-2V3a2 2 0 0 1 2-2z" transform="translate(.5 .2)" fill="#fdfdfd" stroke="#a9a9a9" stroke-width="1.800"/><path d="M18.500 1.200l8 8h-6a2 2 0 0 1-2-2z" fill="#9b9b9b"/><path d="M4.800 14.600h18.200M4.800 19.200h18.200M4.800 23.800h18.200M4.800 28.400h18.200" stroke="#cbcbc7" stroke-width="2.500"/></svg>
<span class="t" style="left:105.4px;top:35.4px;transform:scaleX(0.978)">Instructional_sheet_on_work_safety_2023.doc</span>
<div style="left:0.3px;top:95.8px;width:889px;height:2px;background:#e1e5e9"></div>
<svg style="left:33.8px;top:127.8px;" width="28" height="36.5" viewBox="0 0 28 36.500"><path d="M2.500 1h15.500l8 8v24a2 2 0 0 1-2 2H2.500a2 2 0 0 1-2-2V3a2 2 0 0 1 2-2z" transform="translate(.5 .2)" fill="#fdfdfd" stroke="#a9a9a9" stroke-width="1.800"/><path d="M18.500 1.200l8 8h-6a2 2 0 0 1-2-2z" fill="#9b9b9b"/><path d="M4.800 14.600h18.200M4.800 19.200h18.200M4.800 23.800h18.200M4.800 28.400h18.200" stroke="#cbcbc7" stroke-width="2.500"/></svg>
<span class="t" style="left:105.4px;top:133.4px;transform:scaleX(0.978)">Instructional_sheet_on_work_safety.doc</span>
</div>
<div id="composer" style="left:32px;top:1240.5px;width:1136px;height:292px;background:#f9fafc;border:2px solid #e4e7ea;border-radius:22px">
<span class="t" style="left:23.4px;top:34.4px;font-size:24px;color:#626262;transform:scaleX(1.091)">within</span>
<span class="t" style="left:96.9px;top:34.4px;font-size:24px;transform:scaleX(0.998)">Office Complex 11</span>
</div>
<div id="input" style="left:32px;top:1324.5px;width:1136px;height:207px;border-radius:17px;background:linear-gradient(54deg,#0a5fd0 0%,#1b9cea 20%,#26bff5 38%,#5fe0a6 58%,#a6f06a 78%,#f6f92e 100%)">
<div style="left:2px;top:2px;width:1132px;height:203px;background:#fff;border-radius:15px"></div>
<div id="chip" style="left:26.3px;top:25.8px;width:623.6px;height:75.5px;border:2px solid #e3e3e3;border-radius:9px;background:#fff">
<svg style="left:27.2px;top:18.7px;" width="26.5" height="34" viewBox="0 0 28 36.500"><path d="M2.500 1h15.500l8 8v24a2 2 0 0 1-2 2H2.500a2 2 0 0 1-2-2V3a2 2 0 0 1 2-2z" transform="translate(.5 .2)" fill="#fdfdfd" stroke="#a9a9a9" stroke-width="1.800"/><path d="M18.500 1.200l8 8h-6a2 2 0 0 1-2-2z" fill="#9b9b9b"/><path d="M4.800 14.600h18.200M4.800 19.200h18.200M4.800 23.800h18.200M4.800 28.400h18.200" stroke="#cbcbc7" stroke-width="2.500"/></svg>
<span class="t" style="left:70.1px;top:23.3px;transform:scaleX(0.976)">Instructional_sheet_on_work_safety.doc</span>
<svg style="left:575.7px;top:27.2px;" width="19" height="18" viewBox="0 0 19 18"><path d="M2 2l15 14M17 2L2 16" stroke="#6e6e6e" stroke-width="3.200" stroke-linecap="round"/></svg>
</div>
<div style="left:585px;top:34.5px;width:59px;height:55px;border:5.800px solid #ff8303;border-radius:4px"></div>
<div id="step" style="left:662px;top:35.5px;width:56px;height:56px;background:#ff8205;border-radius:50%">
<span class="t" style="left:18.8px;top:11.9px;font-size:30px;transform:scaleX(0.892)">1</span>
</div>
<div style="left:30px;top:131.5px;width:2.5px;height:34px;background:#111"></div>
<div id="send" style="left:1046px;top:117.5px;width:64px;height:64px;background:#c3daee;border-radius:8px">
<svg style="left:0px;top:0px;" width="64" height="64" viewBox="0 0 64 64"><path d="M46.600 16.200L16.500 33.300 23.400 38L41.700 22.100 28.100 40.200l.500 6.900 4.700-4.800 9.100 3.300z" fill="#fff" stroke="#fff" stroke-width="1" stroke-linejoin="round"/></svg>
</div>
</div>
<svg style="left:680px;top:1060px;" width="220" height="256" viewBox="0 0 220 256"><path d="M206 13.600L33 219.600" stroke="#ff8307" stroke-width="14" stroke-linecap="round"/><path d="M8.500 248.600L15.700 209l30.800 25.500z" fill="#ff8307" stroke="#ff8307" stroke-width="3" stroke-linejoin="round"/></svg>
<svg style="left:34px;top:1566.5px;" width="24" height="24" viewBox="0 0 24 24"><circle cx="12" cy="12" r="10.700" fill="none" stroke="#ababab" stroke-width="2.200"/><path d="M10 10.500h2.500v6M9.500 16.800h5.500" fill="none" stroke="#ababab" stroke-width="2"/><circle cx="12" cy="7.300" r="1.400" fill="#ababab"/></svg>
<span class="t" style="left:72.3px;top:1568.9px;font-size:24px;color:#ababab;transform:scaleX(0.992)">AI-generated content quality may vary</span>
</section>
<div style="left:2160px;top:1546px;width:1200px;height:82px;background:linear-gradient(180deg,rgba(0,0,0,0) 0%,rgba(0,0,0,.012) 30%,rgba(0,0,0,.04) 60%,rgba(0,0,0,.105) 100%);-webkit-mask-image:linear-gradient(90deg,#000 0,#000 50%,transparent 86%);mask-image:linear-gradient(90deg,#000 0,#000 50%,transparent 86%)"></div>
<svg style="left:0px;top:1612px;" width="16" height="16" viewBox="0 0 16 16"><path d="M0 0v16h16A16 14 0 0 1 0 0z" fill="#10160c"/><path d="M1 0A15 14 0 0 0 16 15" fill="none" stroke="#4b525d" stroke-width="2"/></svg>
<svg style="left:3340px;top:1608px;" width="20" height="20" viewBox="0 0 20 20"><path d="M20 0v20H0A20 20 0 0 0 20 0z" fill="#0c0c0c"/></svg>
<script>(function(){var w=window.innerWidth;if(w&&w<3360){document.documentElement.style.zoom=w/3360}})();</script>
</body></html>
